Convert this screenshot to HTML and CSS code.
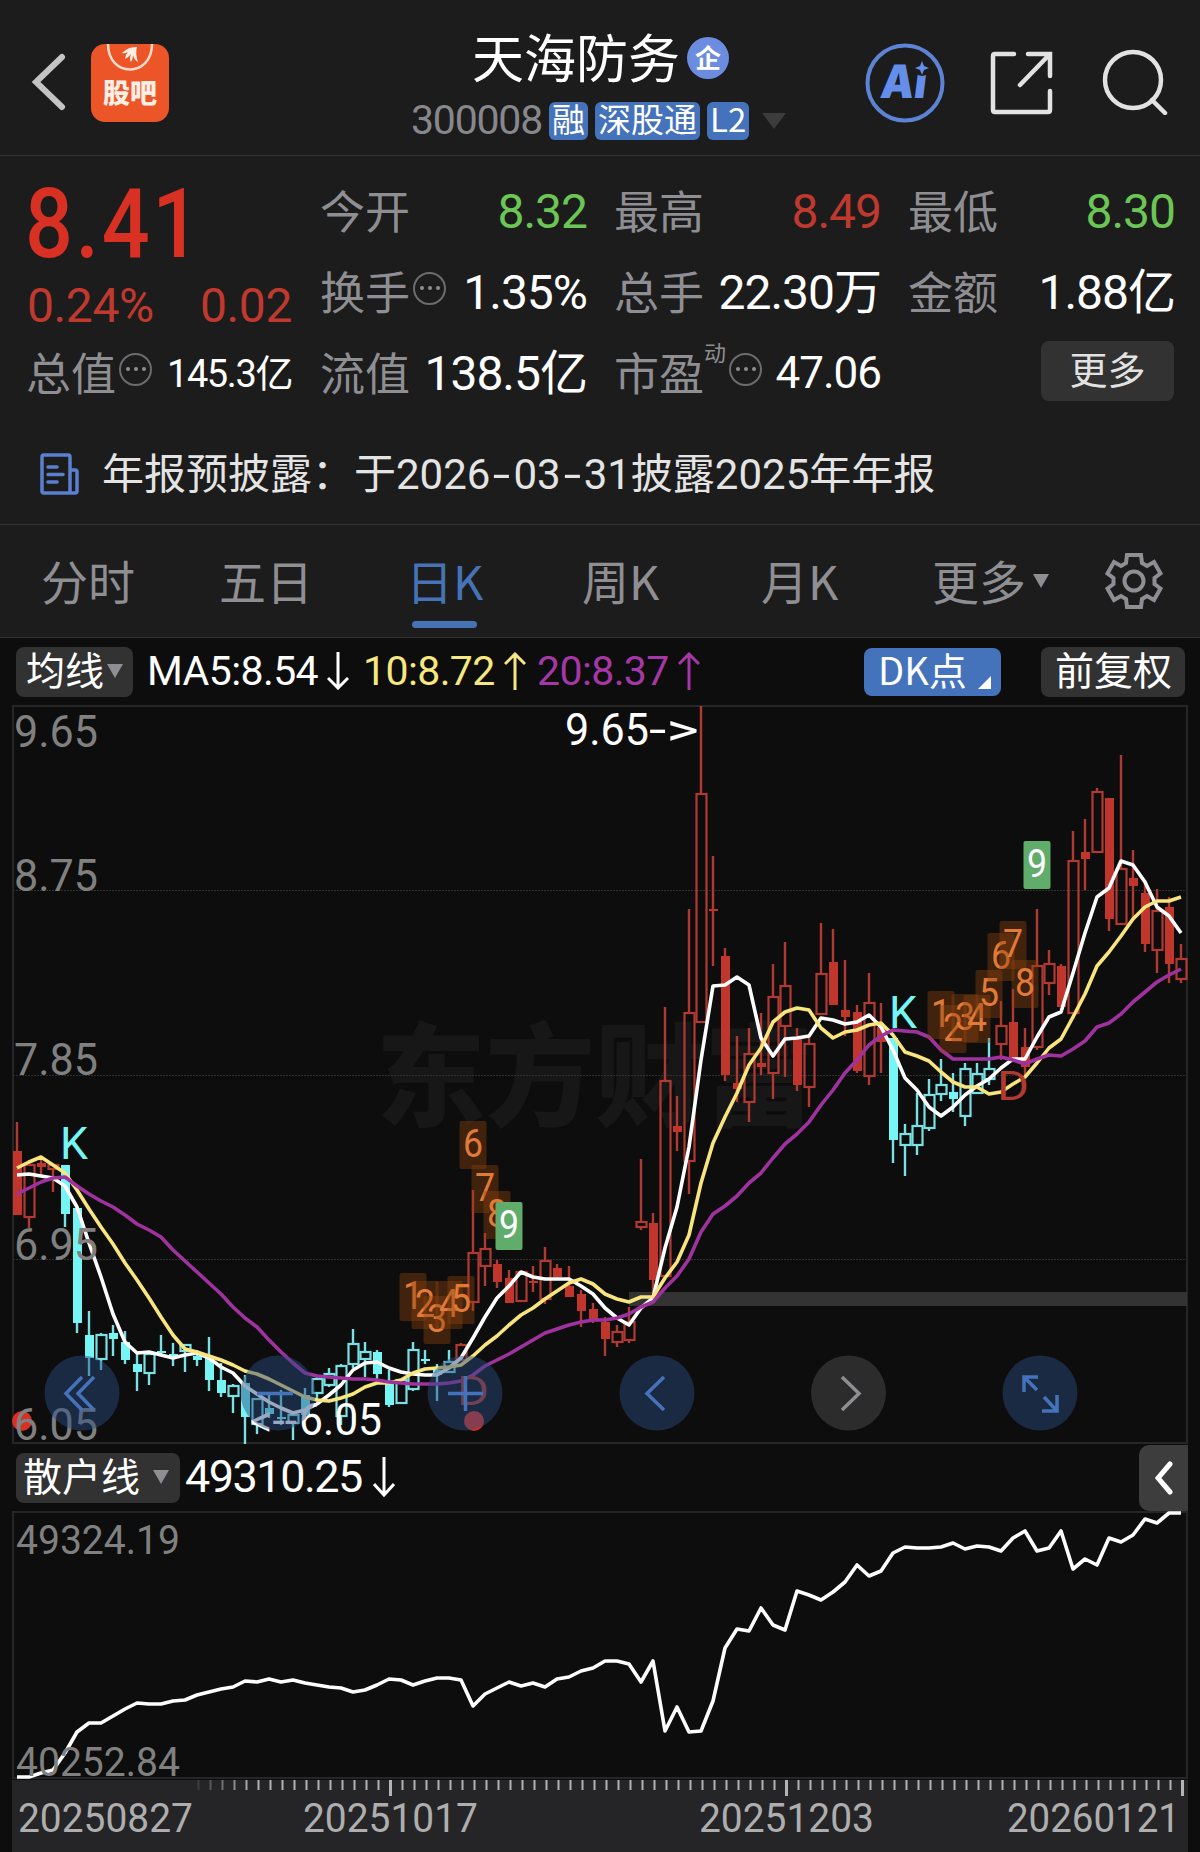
FILE: index.html
```html
<!DOCTYPE html>
<html lang="zh-CN">
<head>
  <meta charset="UTF-8">
  <meta name="viewport" content="width=device-width, initial-scale=1.0">
  <title>天海防务 300008</title>
  <link rel="stylesheet" href="styles.css">
</head>
<body>
  <header class="topbar">
    <div class="topbar-left">
      <svg class="back" width="40" height="60" viewBox="0 0 40 60"><path d="M33 5 L7 30 L33 55"/></svg>
      <div class="guba">
        <svg width="79" height="34" viewBox="0 0 79 34">
          <path class="ring" d="M17 0 C17 34 61 34 61 0"/>
          <path class="feather" d="M31 9 Q38 2 46 3 Q44 9 47 18 Q43 16 42 11 Q42 15 40 18 Q38 15 40 10 Q37 14 34 15 Q34 11 37 8 Q34 10 31 9Z"/>
        </svg>
        <span>股吧</span>
      </div>
    </div>
    <div class="stock">
      <div class="stock-name">天海防务<span class="badge">企</span></div>
      <div class="stock-code">
        <span class="code">300008</span>
        <span class="tag">融</span>
        <span class="tag">深股通</span>
        <span class="tag">L2</span>
        <i class="tri tri-dark"></i>
      </div>
    </div>
    <div class="topbar-right">
      <svg width="80" height="80" viewBox="0 0 80 80">
        <circle class="ai-ring" cx="40" cy="40" r="37.5"/>
        <text class="ai-text" x="21" y="55" textLength="46" lengthAdjust="spacingAndGlyphs">Ai</text>
        <circle class="ai-gap" cx="57" cy="24" r="9"/>
        <path class="ai-star" d="M57 18 L59 23 L64 25 L59 27 L57 32 L55 27 L50 25 L55 23Z"/>
      </svg>
      <svg class="line-icon" width="66" height="66" viewBox="0 0 66 66">
        <path d="M25 4 H6 Q4 4 4 6 V60 Q4 62 6 62 H59 Q61 62 61 60 V41 M39 4 H61 V26 M60 5 L31 35"/>
      </svg>
      <svg class="line-icon" width="66" height="66" viewBox="0 0 66 66">
        <circle cx="31" cy="31" r="28"/><path d="M50 51 L63 64"/>
      </svg>
    </div>
  </header>

  <section class="quote">
    <div class="price">
      <div class="last">8.41</div>
      <div class="change"><span>0.24%</span><span>0.02</span></div>
    </div>
    <div class="cell"><label>今开</label><b class="green">8.32</b></div>
    <div class="cell"><label>最高</label><b class="red">8.49</b></div>
    <div class="cell"><label>最低</label><b class="green">8.30</b></div>
    <div class="cell"><label>换手</label><i class="dots"></i><b>1.35%</b></div>
    <div class="cell"><label>总手</label><b>22.30万</b></div>
    <div class="cell"><label>金额</label><b>1.88亿</b></div>
    <div class="cell"><label>总值</label><i class="dots"></i><b class="small">145.3亿</b></div>
    <div class="cell"><label>流值</label><b>138.5亿</b></div>
    <div class="cell"><label>市盈</label><sup>动</sup><i class="dots"></i><b class="mid">47.06</b></div>
    <div class="cell"><button class="more">更多</button></div>
  </section>

  <section class="notice">
    <svg width="40" height="42" viewBox="0 0 40 42">
      <path d="M30 40 H4 Q2 40 2 38 V4 Q2 2 4 2 H28 Q30 2 30 4 V40 M30 17 H35 Q37 17 37 19 V38 Q37 40 35 40 H30 M8 14 H17 M8 21.500 H23 M8 29 H17"/>
    </svg>
    <span>年报预披露：于2026<em>-</em>03<em>-</em>31披露2025年年报</span>
  </section>

  <nav class="tabs">
    <a>分时</a>
    <a>五日</a>
    <a class="active">日K</a>
    <a>周K</a>
    <a>月K</a>
    <a class="tab-more">更多<i class="tri"></i></a>
    <svg class="gear" width="58" height="58" viewBox="-29 -29 58 58">
      <path d="M-7 -26 H7 L8 -18 L13 -15 L20 -19 L26.500 -7.500 L20.500 -3 V3 L26.500 7.500 L20 19 L13 15 L8 18 L7 26 H-7 L-8 18 L-13 15 L-20 19 L-26.500 7.500 L-20.500 3 V-3 L-26.500 -7.500 L-20 -19 L-13 -15 L-8 -18Z"/>
      <circle r="9.500"/>
    </svg>
  </nav>

  <section class="ma-row">
    <div class="chip">均线<i class="tri"></i></div>
    <div class="ma ma5">MA5:8.54<svg width="22" height="38" viewBox="0 0 22 38"><path d="M11 0 V35 M1 26 L11 36 L21 26"/></svg></div>
    <div class="ma ma10">10:8.72<svg width="22" height="38" viewBox="0 0 22 38"><path d="M11 38 V3 M1 12 L11 2 L21 12"/></svg></div>
    <div class="ma ma20">20:8.37<svg width="22" height="38" viewBox="0 0 22 38"><path d="M11 38 V3 M1 12 L11 2 L21 12"/></svg></div>
    <div class="chip chip-dk">DK点<i class="corner"></i></div>
    <div class="chip chip-adj">前复权</div>
  </section>

  <svg class="chart" id="kline" width="1176" height="739" viewBox="12 705 1176 739"></svg>

  <section class="sub-row">
    <div class="chip chip-sub">散户线<i class="tri"></i></div>
    <div class="sub-value">49310.25<svg width="22" height="40" viewBox="0 0 22 40"><path d="M11 0 V37 M1 27 L11 38 L21 27"/></svg></div>
    <div class="collapse"><svg width="18" height="34" viewBox="0 0 18 34"><path d="M15 3 L3 17 L15 31"/></svg></div>
  </section>

  <svg class="chart" id="retail" width="1176" height="269" viewBox="12 1511 1176 269"></svg>
  <svg class="chart axis" id="axis" width="1176" height="72" viewBox="12 1780 1176 72"></svg>

  <script src="chart.js"></script>
</body>
</html>
```
FILE: styles.css
```css
* {
  box-sizing: border-box;
}
body {
  margin: 0;
  width: 1200px;
  height: 1852px;
  overflow: hidden;
  background: #0d0d0d;
  color: #fff;
  font-family: "Noto Sans CJK SC", sans-serif;
  line-height: 1;
}
svg {
  display: block;
  flex: none;
}
i {
  flex: none;
}
.tri {
  width: 0;
  height: 0;
  border: 8px solid transparent;
  border-top: 14px solid #8e8e93;
  border-bottom: 0;
}
.tri-dark {
  border-width: 16px 12px 0;
  border-top-color: #3c3c3c;
}

/* numbers are set in Roboto, Chinese falls through to Noto */
.code,
.last,
.change,
.cell b,
.notice,
.ma,
.sub-value {
  font-family: Roboto, "Noto Sans CJK SC", sans-serif;
}

/* header */
.topbar {
  display: grid;
  grid-template-columns: 411px 1fr 336px;
  height: 156px;
  background: #1c1c1c;
  border-bottom: 1px solid #333;
}
.topbar-left {
  display: flex;
  align-items: flex-start;
  gap: 22px;
  padding: 44px 0 0 29px;
}
.back {
  margin-top: 8px;
}
.back path {
  fill: none;
  stroke: #c4c4c4;
  stroke-width: 6;
  stroke-linecap: round;
}
.guba {
  width: 78px;
  height: 78px;
  border-radius: 14px;
  background: #ec5528;
  overflow: hidden;
  text-align: center;
  font-size: 27px;
  font-weight: 900;
  color: #ffeee4;
}
.guba .ring {
  fill: none;
  stroke: #ffdccb;
  stroke-width: 2.5;
}
.guba .feather {
  fill: #ffeee4;
}
.stock-name {
  display: flex;
  align-items: center;
  padding: 30px 0 0 61px;
  font-size: 52px;
  white-space: nowrap;
}
.badge {
  width: 42px;
  height: 42px;
  margin: 3px 0 0 7px;
  border-radius: 50%;
  background: #6c8ce0;
  font-size: 26px;
  font-weight: 700;
  line-height: 39px;
  text-align: center;
}
.stock-code {
  display: flex;
  align-items: center;
  margin-top: 19px;
  font-size: 40px;
}
.code {
  width: 138px;
  margin-top: -1px;
  color: #87878c;
  font-size: 41px;
  letter-spacing: -1.2px;
}
.tag {
  height: 38px;
  margin-right: 7px;
  padding: 0 3px;
  border-radius: 6px;
  background: #4573bb;
  font-size: 33px;
  line-height: 33px;
}
.stock-code .tri {
  margin-left: 6px;
}
.topbar-right {
  display: flex;
  align-items: flex-start;
  padding: 43px 0 0 1px;
}
.topbar-right svg + svg {
  margin: 7px 0 0 44px;
}
.topbar-right svg + svg + svg {
  margin: 6px 0 0 47px;
}
.ai-ring {
  fill: none;
  stroke: #5c83d4;
  stroke-width: 4;
}
.ai-text {
  fill: #648eea;
  font: 900 46px Inter, sans-serif;
  transform: skewX(-7deg);
}
.ai-gap {
  fill: #1c1c1c;
}
.ai-star {
  fill: #648eea;
}
.line-icon * {
  fill: none;
  stroke: #e2e2e2;
  stroke-width: 4.5;
  stroke-linecap: round;
}

/* quote numbers */
.quote {
  display: grid;
  grid-template-columns: repeat(4, 265px);
  grid-template-rows: repeat(3, 81px);
  column-gap: 29px;
  height: 254px;
  padding: 11px 0 0 27px;
  background: #1c1c1c;
}
.price {
  grid-row: span 2;
}
.last {
  width: 182px;
  margin: 9px 0 0 -2px;
  color: #d93024;
  font-size: 97px;
  font-weight: 500;
  letter-spacing: 3px;
  transform: scaleX(0.87);
  transform-origin: left;
}
.change {
  display: flex;
  justify-content: space-between;
  margin-top: 9px;
  color: #c0392f;
  font-size: 48px;
  letter-spacing: -0.4px;
}
.cell {
  display: flex;
  align-items: center;
  white-space: nowrap;
}
.cell label {
  margin-left: -1px;
  padding-top: 3px;
  color: #8e8e93;
  font-size: 45px;
}
.cell b {
  margin: 8px -1px 0 auto;
  font-size: 48px;
  font-weight: 400;
  letter-spacing: -1px;
}
.cell .small {
  margin-right: 0;
  font-size: 38px;
  letter-spacing: -1.4px;
}
.cell .mid {
  margin-top: 6px;
  font-size: 44px;
}
.cell .green {
  color: #6cc655;
}
.cell .red {
  color: #c0392f;
}
.cell sup {
  align-self: flex-start;
  margin: 11px 0 0 0;
  color: #8e8e93;
  font-size: 22px;
}
.dots {
  display: flex;
  align-items: center;
  justify-content: center;
  width: 33px;
  height: 33px;
  margin: 0 0 1px 3px;
  border: 2px solid #6c6c6c;
  border-radius: 50%;
}
.dots::before {
  content: "";
  width: 4px;
  height: 4px;
  border-radius: 50%;
  background: #8e8e93;
  box-shadow: -8px 0 #8e8e93, 8px 0 #8e8e93;
}
.more {
  width: 134px;
  height: 60px;
  margin: 2px 0 0 132px;
  padding: 0 0 5px;
  border: 0;
  border-radius: 8px;
  background: #323232;
  color: #e2e2e2;
  font: 38px "Noto Sans CJK SC", sans-serif;
  line-height: 50px;
}

/* notice */
.notice {
  display: flex;
  align-items: center;
  gap: 22px;
  height: 115px;
  padding: 16px 0 0 40px;
  background: #1c1c1c;
  border-bottom: 1px solid #333;
  color: #e4e4e4;
  font-size: 42px;
  white-space: nowrap;
}
.notice em {
  display: inline-block;
  width: 23px;
  font-style: normal;
  text-align: center;
  transform: scaleX(1.5);
}
.notice svg {
  margin-bottom: 2px;
}
.notice path {
  fill: none;
  stroke: #5a80cf;
  stroke-width: 3.5;
  stroke-linecap: round;
}

/* period tabs */
.tabs {
  display: grid;
  grid-template-columns: 178px 187px 176px 179px 171px 173px 58px;
  align-items: center;
  height: 113px;
  padding-left: 41px;
  background: #1c1c1c;
  border-bottom: 1px solid #333;
  color: #8e8e93;
  font-size: 47px;
}
.tabs a {
  display: flex;
  align-items: center;
  height: 100%;
  padding-bottom: 4px;
  white-space: nowrap;
}
.tabs .active {
  position: relative;
  color: #4573b5;
}
.tabs .active::after {
  content: "";
  position: absolute;
  left: 6px;
  bottom: 9px;
  width: 65px;
  height: 7px;
  border-radius: 4px;
  background: #4573b5;
}
.tab-more .tri {
  margin: 4px 0 0 7px;
}
.gear {
  fill: none;
  stroke: #8e8e93;
  stroke-width: 4;
}

/* chart legends */
.ma-row {
  display: flex;
  align-items: center;
  height: 67px;
  padding: 0 15px 0 16px;
}
.chip {
  display: flex;
  align-items: center;
  height: 50px;
  padding: 0 0 6px 10px;
  border-radius: 8px;
  background: #323232;
  font-size: 39px;
}
.ma-row .chip:first-child {
  width: 117px;
}
.chip .tri {
  margin: 5px 0 0 3px;
}
.ma {
  display: flex;
  align-items: center;
  width: 216px;
  padding: 0 0 1px 14px;
  font-size: 41px;
  letter-spacing: -0.6px;
}
.ma svg {
  margin: 0 0 0 9px;
}
.ma path,
.sub-value path {
  fill: none;
  stroke: currentColor;
  stroke-width: 3;
}
.ma10 {
  width: 174px;
  color: #f6e780;
}
.ma20 {
  width: 178px;
  color: #a637a6;
}
.chip-dk {
  width: 137px;
  height: 48px;
  margin-left: auto;
  padding-left: 14px;
  background: #4573bb;
  font-size: 38px;
}
.corner {
  align-self: flex-end;
  margin: 0 0 1px 11px;
  border-left: 13px solid transparent;
  border-bottom: 13px solid #fff;
}
.chip-adj {
  width: 144px;
  margin-left: 40px;
  padding-left: 14px;
}
.sub-row {
  display: flex;
  align-items: center;
  height: 67px;
  padding: 0 12px 0 16px;
}
.chip-sub {
  width: 164px;
  padding-left: 7px;
}
.chip-sub .tri {
  margin-left: 13px;
}
.sub-value {
  display: flex;
  align-items: center;
  padding: 0 0 2px 5px;
  font-size: 45px;
  letter-spacing: -1.5px;
}
.sub-value svg {
  margin-left: 11px;
}
.collapse {
  display: flex;
  align-items: center;
  width: 49px;
  height: 66px;
  margin-left: auto;
  padding-left: 16px;
  border-radius: 10px 0 0 10px;
  background: #3d3d3d;
}
.collapse path {
  fill: none;
  stroke: #fff;
  stroke-width: 5;
  stroke-linecap: round;
}

/* charts */
.chart {
  margin-left: 12px;
}
.chart text {
  font-family: Roboto, "Noto Sans CJK SC", sans-serif;
}
.axis {
  background: #252527;
}
.frame {
  fill: none;
  stroke: #262626;
  stroke-width: 2;
}
.grid {
  stroke: #303030;
  stroke-width: 1;
  stroke-dasharray: 2 1;
}
.watermark {
  fill: #171717;
  font-weight: 900;
}
.band {
  fill: #333;
}
.up {
  stroke: #b03a31;
  fill: none;
}
.down {
  stroke: #7ae0e4;
  fill: none;
}
.up.solid {
  stroke: none;
  fill: #c0362c;
}
.down.solid {
  stroke: none;
  fill: #76f5f5;
}
.line {
  fill: none;
  stroke-width: 3.6;
  stroke-linejoin: round;
}
.label {
  fill: #808080;
}
.date {
  fill: #aeaeae;
}
.white {
  fill: #fff;
}
.k {
  fill: #76f5f5;
}
.d {
  fill: #b03a31;
}
.dot {
  fill: #d93024;
}
.nine-box {
  fill: #60ad6b;
}
.count-box {
  fill: #8f430f;
  opacity: 0.4;
}
.count {
  fill: #e27a38;
}
.ctl {
  fill: #2a4b80;
  opacity: 0.48;
}
.ctl-off {
  fill: #333;
  opacity: 0.85;
}
.ctl-icon {
  fill: none;
  stroke: #4573bb;
  stroke-width: 3.5;
}
.ctl-icon.off {
  stroke: #8e8e93;
}
```
FILE: chart.js
```js
const NS = 'http://www.w3.org/2000/svg';
const X0 = 17;
const STEP = 12;
const xAt = (i) => X0 + STEP * i;

function add(parent, tag, attrs, text) {
  const node = document.createElementNS(NS, tag);
  for (const key in attrs) node.setAttribute(key, attrs[key]);
  if (text) node.textContent = text;
  parent.appendChild(node);
  return node;
}

function label(parent, cls, x, y, width, size, text) {
  add(parent, 'text', {
    class: cls, x, y, 'font-size': size,
    textLength: width, lengthAdjust: 'spacingAndGlyphs'
  }, text);
}

function line(parent, color, values) {
  const points = values.map((v, i) => xAt(i) + ',' + v).join(' ');
  add(parent, 'polyline', { class: 'line', stroke: color, points });
}

// [wick top, body top, body bottom, wick bottom, solid]
const candles = [
  [1122,1151,1215,1215,1],[1160,1165,1217,1228,0],[1158,1163,1167,1175,1],[1165,1165,1169,1192,0],[1165,1165,1214,1227,1],
  [1208,1208,1323,1333,1],[1311,1335,1358,1376,1],[1333,1335,1359,1370,0],[1325,1333,1339,1356,1],[1331,1342,1360,1364,1],
  [1353,1364,1372,1391,1],[1352,1354,1373,1385,0],[1335,1351,1353,1355,1],[1343,1354,1356,1366,1],[1344,1345,1351,1372,0],
  [1350,1356,1360,1366,1],[1337,1358,1380,1391,1],[1363,1380,1393,1397,1],[1384,1386,1396,1413,0],[1375,1383,1417,1444,1],
  [1399,1399,1424,1434,0],[1395,1408,1414,1418,1],[1390,1417,1419,1425,1],[1413,1415,1423,1440,0],[1388,1395,1415,1420,1],
  [1375,1379,1393,1400,0],[1368,1374,1385,1387,0],[1364,1366,1416,1425,0],[1329,1344,1364,1368,0],[1342,1352,1359,1377,0],
  [1350,1352,1374,1382,1],[1370,1382,1405,1407,1],[1380,1380,1403,1403,0],[1342,1350,1389,1391,0],[1350,1359,1361,1364,1],
  [1364,1370,1375,1401,1],[1350,1362,1372,1373,0],[1343,1345,1360,1360,0],[1190,1253,1302,1311,0],[1233,1249,1266,1286,0],
  [1260,1264,1282,1288,1],[1270,1278,1303,1303,1],[1272,1272,1301,1301,0],[1266,1281,1283,1292,1],[1247,1261,1299,1304,0],
  [1264,1268,1277,1280,1],[1266,1286,1297,1297,1],[1290,1294,1311,1327,1],[1303,1309,1319,1323,1],[1317,1322,1339,1356,1],
  [1325,1332,1342,1347,0],[1307,1322,1340,1343,0],[1159,1222,1227,1230,0],[1213,1223,1280,1293,1],[1007,1081,1276,1276,0],
  [1096,1126,1132,1151,1],[909,1013,1161,1194,0],[706,794,1022,1022,0],[856,909,911,966,1],[948,956,1075,1081,1],
  [1036,1083,1089,1102,1],[1028,1054,1102,1122,0],[1013,1063,1067,1075,1],[964,997,1073,1099,0],[942,986,1026,1077,0],
  [1028,1038,1085,1091,1],[1037,1044,1087,1107,0],[923,974,1014,1014,0],[929,962,1005,1005,1],[960,1010,1017,1036,1],
  [1005,1012,1071,1073,1],[973,1003,1076,1085,0],[1003,1027,1042,1073,1],[1038,1038,1140,1163,1],[1124,1134,1145,1176,0],
  [1093,1126,1145,1155,0],[1079,1095,1128,1131,0],[1059,1085,1094,1101,0],[1073,1092,1099,1112,1],[1063,1069,1116,1126,0],
  [1063,1074,1093,1093,0],[1038,1069,1079,1085,0],[1001,1026,1044,1060,0],[989,1022,1058,1058,1],[1028,1047,1067,1077,1],
  [909,966,1047,1050,0],[950,964,983,995,0],[964,966,1007,1007,1],[831,861,1013,1013,0],[819,852,859,890,1],
  [788,792,852,852,0],[798,798,919,931,1],[755,869,924,924,0],[850,878,886,920,1],[880,893,944,952,1],
  [889,911,950,973,0],[897,907,964,983,1],[944,959,979,983,0]
];

const ma5 = [1175,1174,1176,1178,1186,1207,1243,1277,1314,1342,1353,1352,1355,1358,1355,1353,1358,1367,1373,1386,1394,1402,1408,1413,1410,
  1404,1395,1385,1370,1363,1362,1368,1372,1374,1375,1375,1368,1358,1338,1317,1298,1286,1272,1277,1279,1279,1279,1286,1294,1308,
  1318,1325,1308,1298,1248,1207,1147,1060,986,985,977,985,1038,1056,1039,1038,1036,1018,1020,1024,1022,1015,1027,1050,1078,
  1090,1107,1116,1107,1095,1086,1079,1068,1059,1059,1037,1017,1012,973,933,897,888,861,865,882,907,916,933];

const ma10 = [1168,1162,1157,1165,1173,1190,1209,1227,1244,1263,1280,1298,1317,1335,1349,1352,1356,1360,1365,1371,1374,1379,1385,1391,1397,
  1400,1401,1398,1394,1387,1383,1383,1380,1373,1369,1368,1367,1365,1356,1345,1336,1325,1315,1308,1299,1291,1283,1279,1284,1294,
  1299,1302,1297,1297,1278,1262,1235,1183,1143,1117,1093,1065,1048,1022,1012,1008,1010,1028,1038,1032,1030,1025,1023,1035,1052,
  1056,1061,1072,1082,1087,1087,1094,1092,1084,1077,1063,1048,1039,1017,994,966,952,936,919,907,901,901,897];

const ma20 = [1194,1188,1182,1178,1177,1186,1194,1201,1207,1215,1224,1230,1237,1250,1261,1272,1283,1294,1307,1318,1327,1340,1352,1363,1373,
  1376,1377,1378,1379,1379,1380,1382,1383,1384,1384,1384,1383,1381,1375,1366,1360,1354,1347,1340,1333,1329,1325,1322,1320,1320,
  1318,1314,1307,1302,1288,1276,1259,1232,1214,1206,1196,1183,1173,1158,1144,1134,1122,1105,1090,1073,1060,1045,1036,1030,1031,
  1032,1037,1050,1059,1059,1059,1059,1057,1060,1064,1059,1055,1056,1049,1041,1027,1023,1014,1002,992,982,975,969];

const retail = [1777,1777,1773,1770,1753,1732,1723,1723,1716,1709,1703,1704,1704,1701,1700,1695,1692,1689,1687,1681,1682,1679,1682,1680,1683,
  1685,1687,1688,1692,1690,1685,1679,1680,1685,1681,1678,1678,1680,1706,1694,1688,1682,1686,1683,1687,1679,1677,1671,1668,1661,
  1661,1664,1682,1661,1731,1707,1732,1731,1701,1648,1629,1631,1608,1625,1630,1591,1595,1600,1592,1582,1565,1576,1571,1553,1547,
  1548,1548,1547,1543,1549,1546,1547,1551,1538,1531,1551,1548,1531,1569,1559,1565,1538,1542,1535,1519,1523,1513,1513];

// ---- K line ----
const k = document.getElementById('kline');
label(k, 'watermark', 376, 1118, 438, 112, '东方财富');
add(k, 'rect', { class: 'frame', x: 13, y: 706, width: 1174, height: 737 });
[890, 1075, 1259].forEach((y) => add(k, 'line', { class: 'grid', x1: 13, x2: 1187, y1: y + 0.5, y2: y + 0.5 }));
add(k, 'rect', { class: 'band', x: 629, y: 1292, width: 558, height: 14 });

candles.forEach(([high, top, bottom, low, solid], i) => {
  const x = xAt(i);
  const cls = (i > 3 && i < 37) || (i > 72 && i < 82) ? 'down' : 'up';
  if (high < top) add(k, 'line', { class: cls, x1: x, x2: x, y1: high, y2: top, 'stroke-width': 2.4 });
  if (low > bottom) add(k, 'line', { class: cls, x1: x, x2: x, y1: bottom, y2: low, 'stroke-width': 2.4 });
  if (solid) {
    add(k, 'rect', { class: cls + ' solid', x: x - 4, y: top, width: 9, height: bottom - top });
  } else {
    add(k, 'rect', { class: cls, x: x - 4.5, y: top, width: 10, height: bottom - top, 'stroke-width': 2.2 });
  }
});

line(k, '#ffffff', ma5);
line(k, '#f8e57e', ma10);
line(k, '#a032a0', ma20);

// nine-turn counters: first candle index and box tops for 1..9
function counters(start, tops) {
  tops.forEach((y, n) => {
    const x = xAt(start + n);
    const nine = n === 8;
    add(k, 'rect', { class: nine ? 'nine-box' : 'count-box', x: x - 13.5, y, width: 27, height: 48, rx: 2 });
    label(k, nine ? 'white' : 'count', x - 10, y + 36, 20, 38, String(n + 1));
  });
}
counters(33, [1273, 1281, 1296, 1281, 1276, 1121, 1165, 1191, 1202]);
counters(77, [991, 1005, 994, 995, 970, 933, 921, 960, 841]);

label(k, 'k', 60, 1159, 28, 44, 'K');
label(k, 'k', 889, 1028, 28, 44, 'K');
label(k, 'd', 457, 1405, 32, 41, 'D');
label(k, 'd', 997, 1100, 32, 41, 'D');
add(k, 'circle', { class: 'dot', cx: 22, cy: 1421, r: 10 });
add(k, 'circle', { class: 'dot', cx: 474, cy: 1421, r: 10 });

label(k, 'label', 14, 747, 84, 44, '9.65');
label(k, 'label', 14, 891, 84, 44, '8.75');
label(k, 'label', 14, 1075, 84, 44, '7.85');
label(k, 'label', 14, 1260, 84, 44, '6.95');
label(k, 'label', 14, 1440, 84, 44, '6.05');
label(k, 'white', 565, 745, 84, 44, '9.65');
label(k, 'white', 649, 745, 50, 44, '->');
label(k, 'white', 250, 1436, 47, 44, '<--');
label(k, 'white', 299, 1435, 83, 44, '6.05');

[82, 278, 465, 657, 848.5, 1040].forEach((cx, i) => {
  add(k, 'circle', { class: i === 4 ? 'ctl-off' : 'ctl', cx, cy: 1393, r: 37.5 });
});
add(k, 'path', { class: 'ctl-icon', d: 'M82 1377 L66 1393.500 L82 1410 M94 1377 L78 1393.500 L94 1410' });
add(k, 'path', { class: 'ctl-icon', d: 'M257 1393.500 H293' });
add(k, 'path', { class: 'ctl-icon', d: 'M448 1393.500 H483 M465.500 1376 V1411' });
add(k, 'path', { class: 'ctl-icon', d: 'M664 1377 L647 1393.500 L664 1410' });
add(k, 'path', { class: 'ctl-icon off', d: 'M842 1377 L859 1393.500 L842 1410' });
add(k, 'path', { class: 'ctl-icon', d: 'M1038 1377 H1024 V1392 M1024 1377 L1037 1390 M1042 1411 H1057 V1395 M1057 1411 L1044 1397' });

// ---- retail line ----
const r = document.getElementById('retail');
add(r, 'rect', { class: 'frame', x: 13, y: 1512, width: 1174, height: 266 });
line(r, '#ffffff', retail);
label(r, 'label', 16, 1554, 164, 41, '49324.19');
label(r, 'label', 16, 1776, 164, 41, '40252.84');

// ---- date axis ----
const a = document.getElementById('axis');
for (let i = 15; i < 98; i++) {
  const major = i === 31 || i === 64 || i === 97;
  add(a, 'rect', {
    x: xAt(i) + (major ? 0 : 0.5), y: 1780, width: major ? 3 : 2, height: major ? 16 : 10,
    fill: '#b4b4b4', opacity: Math.min(1, (i - 14) * 0.18)
  });
}
label(a, 'date', 18, 1832, 175, 41, '20250827');
label(a, 'date', 303, 1832, 175, 41, '20251017');
label(a, 'date', 699, 1832, 175, 41, '20251203');
label(a, 'date', 1007, 1832, 173, 41, '20260121');
```
